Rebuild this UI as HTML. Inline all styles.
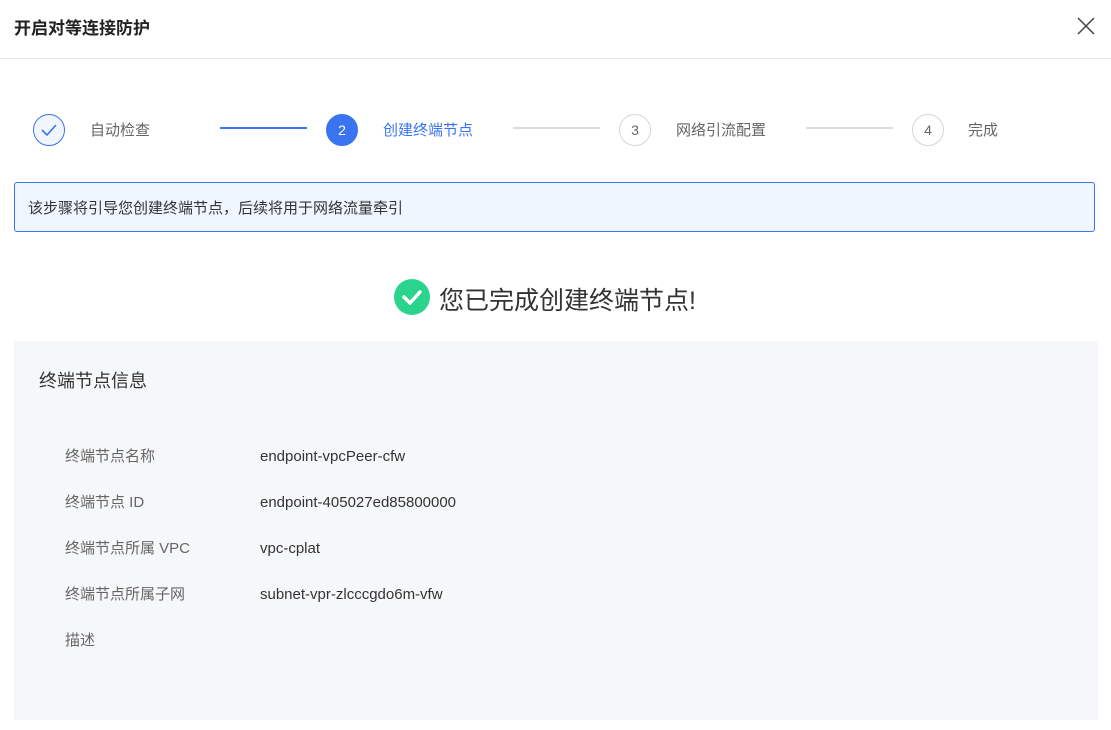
<!DOCTYPE html>
<html><head><meta charset="utf-8"><style>
*{margin:0;padding:0;box-sizing:border-box}
body{width:1111px;height:730px;background:#fff;font-family:"Liberation Sans","Noto Sans CJK SC",sans-serif;color:#333;position:relative;overflow:hidden}
.a{position:absolute;white-space:nowrap;line-height:1.2}
.circ{position:absolute;width:32px;height:32px;border-radius:50%;border:1px solid #d5d5d5;text-align:center;line-height:30px;font-size:14px;color:#666}
.line{position:absolute;height:2px;top:127px;width:87px;background:#dcdcdc}
.lab{font-size:15px;color:#666}
.val{font-size:15px;color:#333}
</style></head><body>
<div class="a" style="left:14px;top:19px;font-size:17px;font-weight:bold;color:#222">开启对等连接防护</div>
<svg class="a" style="left:1077px;top:17px" width="18" height="18" viewBox="0 0 18 18"><path d="M1 1L17 17M17 1L1 17" stroke="#444" stroke-width="1.5"/></svg>
<div class="a" style="left:0;top:58px;width:1111px;height:1px;background:#e6e6ee"></div>

<div class="circ" style="left:33px;top:114px;border-color:#3b74f0;background:#f0f5ff"><svg width="20" height="20" viewBox="0 0 20 20" style="margin-top:5px"><path d="M3 10L8 15L17 5" fill="none" stroke="#3b74f0" stroke-width="1.6"/></svg></div>
<div class="a lab" style="left:90px;top:122px">自动检查</div>
<div class="line" style="left:220px;background:#3b74f0"></div>
<div class="circ" style="left:326px;top:114px;background:#3b74f0;border-color:#3b74f0;color:#fff">2</div>
<div class="a lab" style="left:383px;top:122px;color:#3b74f0">创建终端节点</div>
<div class="line" style="left:513px"></div>
<div class="circ" style="left:619px;top:114px">3</div>
<div class="a lab" style="left:676px;top:122px">网络引流配置</div>
<div class="line" style="left:806px"></div>
<div class="circ" style="left:912px;top:114px">4</div>
<div class="a lab" style="left:968px;top:122px">完成</div>

<div class="a" style="left:14px;top:182px;width:1081px;height:50px;border:1px solid #3b74f0;border-radius:3px;background:#eff6ff"></div>
<div class="a" style="left:28px;top:200px;font-size:15px;color:#333">该步骤将引导您创建终端节点，后续将用于网络流量牵引</div>

<svg class="a" style="left:394px;top:279px" width="36" height="36" viewBox="0 0 36 36"><circle cx="18" cy="18" r="18" fill="#2ad48c"/><path d="M10 18L16 24L26 13" fill="none" stroke="#fff" stroke-width="3.5" stroke-linecap="round" stroke-linejoin="round"/></svg>
<div class="a" style="left:439px;top:286px;font-size:25px;color:#333">您已完成创建终端节点!</div>

<div class="a" style="left:14px;top:341px;width:1085px;height:379px;background:#f6f7f9"></div>
<div class="a" style="left:39px;top:371px;font-size:18px;color:#333">终端节点信息</div>
<div class="a lab" style="left:65px;top:448px">终端节点名称</div><div class="a val" style="left:260px;top:448px">endpoint-vpcPeer-cfw</div>
<div class="a lab" style="left:65px;top:494px">终端节点 ID</div><div class="a val" style="left:260px;top:494px">endpoint-405027ed85800000</div>
<div class="a lab" style="left:65px;top:540px">终端节点所属 VPC</div><div class="a val" style="left:260px;top:540px">vpc-cplat</div>
<div class="a lab" style="left:65px;top:586px">终端节点所属子网</div><div class="a val" style="left:260px;top:586px">subnet-vpr-zlcccgdo6m-vfw</div>
<div class="a lab" style="left:65px;top:632px">描述</div>
</body></html>
